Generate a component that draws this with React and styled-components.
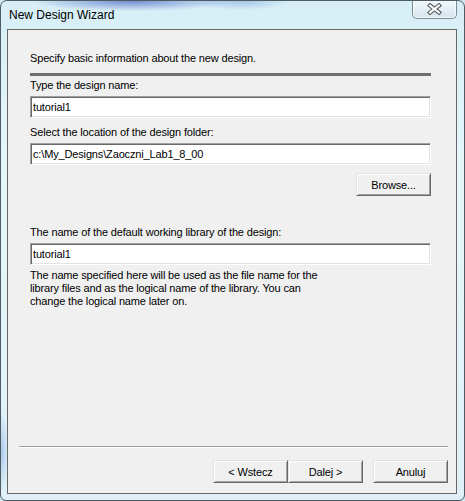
import React from 'react';
import styled, { createGlobalStyle } from 'styled-components';

const GlobalStyle = createGlobalStyle`
  html, body {
    margin: 0;
    padding: 0;
    background: #cfe6f1;
  }
  * {
    box-sizing: border-box;
  }
`;

function CloseGlyph() {
  return (
    <svg width="15" height="12" viewBox="0 0 15 12">
      <path d="M3 2.5 L12 9.5 M12 2.5 L3 9.5" stroke="#555c62" strokeWidth="4.2" strokeLinecap="square" fill="none" />
      <path d="M3 2.5 L12 9.5 M12 2.5 L3 9.5" stroke="#ffffff" strokeWidth="2" strokeLinecap="square" fill="none" />
    </svg>
  );
}

function App() {
  return (
    <>
      <GlobalStyle />
      <Window>
        <TitleBar>
          <Title>New Design Wizard</Title>
          <CloseButton aria-label="Close">
            <CloseGlyph />
          </CloseButton>
        </TitleBar>
        <Client>
          <Page>
            <Intro>Specify basic information about the new design.</Intro>
            <Rule />
            <Label $gap={3}>Type the design name:</Label>
            <Field defaultValue="tutorial1" />
            <Label $gap={8}>Select the location of the design folder:</Label>
            <Field defaultValue="c:\My_Designs\Zaoczni_Lab1_8_00" />
            <BrowseRow>
              <Button>Browse...</Button>
            </BrowseRow>
            <Label $gap={30}>The name of the default working library of the design:</Label>
            <Field defaultValue="tutorial1" />
            <Note>
              The name specified here will be used as the file name for the<br />
              library files and as the logical name of the library. You can<br />
              change the logical name later on.
            </Note>
          </Page>
          <Footer>
            <Separator />
            <ButtonRow>
              <Button>&lt; Wstecz</Button>
              <Button>Dalej &gt;</Button>
              <Button $spaced>Anuluj</Button>
            </ButtonRow>
          </Footer>
        </Client>
      </Window>
    </>
  );
}

export default App;

const Window = styled.div`
  width: 465px;
  height: 501px;
  display: flex;
  flex-direction: column;
  padding: 0 7px 6px 6px;
  border: 1px solid #4f5b63;
  border-radius: 7px 7px 6px 6px;
  background:
    radial-gradient(ellipse 100px 10px at 130px 0px, rgba(30, 60, 180, 0.55), transparent),
    radial-gradient(ellipse 50px 9px at 240px 0px, rgba(50, 100, 200, 0.3), transparent),
    radial-gradient(ellipse 8px 40px at 0px 450px, rgba(60, 120, 210, 0.35), transparent),
    linear-gradient(180deg, #d6eef6 0%, #e6f7fb 35%, #dff1f7 100%);
  font-family: "Liberation Sans", Arial, sans-serif;
  overflow: hidden;
`;

const TitleBar = styled.div`
  height: 28px;
  flex: none;
  display: flex;
  justify-content: space-between;
  align-items: flex-start;
`;

const Title = styled.div`
  padding: 7px 0 0 2px;
  font-size: 12px;
  line-height: 15px;
  color: #000;
`;

const CloseButton = styled.div`
  width: 45px;
  height: 19px;
  margin-top: -1px;
  display: flex;
  align-items: center;
  justify-content: center;
  border: 1px solid #7d8b95;
  border-top: none;
  border-radius: 0 0 5px 5px;
  background: linear-gradient(180deg, #f3fafd 0%, #e4eff5 50%, #d6e4ec 100%);
  box-shadow: inset 0 0 0 1px rgba(255, 255, 255, 0.7);
`;

const Client = styled.div`
  flex: 1;
  display: flex;
  flex-direction: column;
  border: 1px solid #676767;
  background: #f0f0f0;
  font-size: 11px;
  line-height: 13px;
  letter-spacing: -0.15px;
  color: #000;
`;

const Page = styled.div`
  display: flex;
  flex-direction: column;
  padding: 22px 25px 0 22px;
`;

const Intro = styled.p`
  margin: 0;
`;

const Rule = styled.div`
  height: 3px;
  margin-top: 8px;
  background: #6e6e6e;
`;

const Label = styled.div`
  margin-top: ${(p) => p.$gap}px;
  margin-bottom: 4px;
  white-space: nowrap;
`;

const Field = styled.input`
  height: 22px;
  width: 100%;
  padding: 0 2px;
  border: 1px solid;
  border-color: #a0a0a0 #ffffff #ffffff #a0a0a0;
  box-shadow: inset 1px 1px 0 #696969, inset -1px -1px 0 #e3e3e3;
  background: #fff;
  font-family: inherit;
  font-size: 11px;
  letter-spacing: -0.15px;
  color: #000;
  outline: none;
`;

const BrowseRow = styled.div`
  display: flex;
  justify-content: flex-end;
  margin-top: 8px;
`;

const Note = styled.p`
  margin: 4px 0 0;
  white-space: nowrap;
`;

const Footer = styled.div`
  margin-top: auto;
  padding: 0 8px 10px 11px;
`;

const Separator = styled.div`
  height: 2px;
  border-top: 1px solid #a0a0a0;
  border-bottom: 1px solid #ffffff;
`;

const ButtonRow = styled.div`
  display: flex;
  justify-content: flex-end;
  margin-top: 12px;
`;

const Button = styled.button`
  width: 75px;
  height: 23px;
  margin-left: ${(p) => (p.$spaced ? '10px' : '0')};
  padding: 0;
  border: 1px solid;
  border-color: #e3e3e3 #696969 #696969 #e3e3e3;
  box-shadow: inset 1px 1px 0 #ffffff, inset -1px -1px 0 #a0a0a0;
  background: #f0f0f0;
  font-family: "Liberation Sans", Arial, sans-serif;
  font-size: 11px;
  letter-spacing: -0.15px;
  color: #000;
`;
